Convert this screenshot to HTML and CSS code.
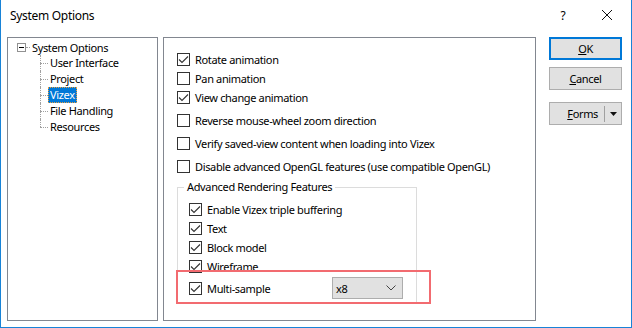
FILE: index.html
```html
<!DOCTYPE html>
<html lang="en">
<head>
  <meta charset="UTF-8">
  <title>System Options</title>
  <link rel="stylesheet" href="styles.css">
</head>
<body>

  <div class="window">
    <div class="titlebar">
      <span class="title">System Options</span>
      <span class="help">?</span>
      <span class="close">
        <svg width="12" height="12" viewBox="0 0 12 12"><path d="M1 1 L11 11 M11 1 L1 11" stroke="#111" stroke-width="1" fill="none"/></svg>
      </span>
    </div>

    <div class="content">
      <!-- tree of option pages -->
      <div class="tree">
        <div class="tree-root">
          <span class="expander"></span>
          <span class="stub"></span>
          <span>System Options</span>
        </div>
        <ul class="tree-children">
          <li><span class="branch"></span><span class="node">User Interface</span></li>
          <li><span class="branch"></span><span class="node">Project</span></li>
          <li><span class="branch"></span><span class="node selected">Vizex</span></li>
          <li><span class="branch"></span><span class="node">File Handling</span></li>
          <li><span class="branch"></span><span class="node">Resources</span></li>
        </ul>
      </div>

      <!-- Vizex page -->
      <div class="page">
        <div class="options">
          <label class="opt"><span class="box checked"></span>Rotate animation</label>
          <label class="opt"><span class="box"></span>Pan animation</label>
          <label class="opt"><span class="box checked"></span>View change animation</label>
          <label class="opt spaced"><span class="box"></span>Reverse mouse-wheel zoom direction</label>
          <label class="opt spaced"><span class="box"></span>Verify saved-view content when loading into Vizex</label>
          <label class="opt spaced"><span class="box"></span>Disable advanced OpenGL features (use compatible OpenGL)</label>
        </div>

        <fieldset class="group">
          <legend>Advanced Rendering Features</legend>
          <label class="opt"><span class="box checked"></span>Enable Vizex triple buffering</label>
          <label class="opt"><span class="box checked"></span>Text</label>
          <label class="opt"><span class="box checked"></span>Block model</label>
          <label class="opt"><span class="box checked"></span>Wireframe</label>
          <div class="opt multi">
            <label class="opt-label"><span class="box checked"></span>Multi-sample</label>
            <div class="combo">
              <span>x8</span>
              <svg width="10" height="6" viewBox="0 0 10 6"><path d="M0.5 0.5 L5 5 L9.5 0.5" stroke="#444" stroke-width="1" fill="none"/></svg>
            </div>
          </div>
        </fieldset>

        <div class="highlight"></div>
      </div>

      <!-- dialog buttons -->
      <div class="buttons">
        <button class="btn default"><u>O</u>K</button>
        <button class="btn"><u>C</u>ancel</button>
        <button class="btn split">
          <span class="split-text"><u>F</u>orms</span>
          <span class="split-arrow">
            <svg width="7" height="4" viewBox="0 0 7 4"><path d="M0 0 H7 L3.5 4 Z" fill="#111"/></svg>
          </span>
        </button>
      </div>
    </div>
  </div>

</body>
</html>
```

FILE: styles.css
```css
body {
  margin: 0;
  padding: 0;
  background-color: #ffffff;
  font-family: "Noto Sans", "Open Sans", sans-serif;
  font-size: 11px;
  letter-spacing: -0.35px;
  color: #000;
}

.window {
  box-sizing: border-box;
  width: 632px;
  height: 328px;
  border: 1px solid #1883d7;
  border-top: none;
  background-color: #fff;
  display: flex;
  flex-direction: column;
}

/* Title bar */
.titlebar {
  height: 30px;
  display: flex;
  align-items: center;
  flex-shrink: 0;
}

.title {
  font-size: 12px;
  letter-spacing: -0.3px;
  margin-left: 9px;
  flex: 1;
}

.help {
  font-size: 12px;
  width: 12px;
  text-align: center;
  margin-right: 32px;
}

.close {
  display: flex;
  margin-right: 18px;
}

/* Main area */
.content {
  display: flex;
  padding: 7px 0 0 6px;
  gap: 5px;
}

.tree {
  box-sizing: border-box;
  width: 151px;
  height: 284px;
  border: 1px solid #828790;
  padding: 1px 0 0 9px;
}

.tree-root {
  display: flex;
  align-items: center;
  height: 16px;
}

.expander {
  box-sizing: border-box;
  width: 9px;
  height: 9px;
  border: 1px solid #919191;
  position: relative;
  background: #fff;
}

.expander::after {
  content: "";
  position: absolute;
  left: 1px;
  top: 3px;
  width: 5px;
  height: 1px;
  background: #000;
}

.stub {
  width: 4px;
  border-top: 1px dotted #a0a0a0;
  margin: 0 2px 0 0;
}

.tree-children {
  list-style: none;
  margin: 0 0 0 23px;
  padding: 0;
}

.tree-children li {
  position: relative;
  display: flex;
  align-items: center;
  height: 16px;
}

.tree-children li::before {
  content: "";
  position: absolute;
  left: 0;
  top: 0;
  height: 16px;
  border-left: 1px dotted #a0a0a0;
}

.tree-children li:last-child::before {
  height: 8px;
}

.branch {
  width: 8px;
  border-top: 1px dotted #a0a0a0;
}

.node {
  padding: 0 1px;
  line-height: 14px;
  border: 1px solid transparent;
}

.node.selected {
  background-color: #0078d7;
  color: #fff;
  border: 1px dotted #e8a040;
}

/* Page */
.page {
  box-sizing: border-box;
  width: 373px;
  height: 284px;
  border: 1px solid #828790;
  position: relative;
  padding: 12px 0 0 13px;
}

.options {
  display: flex;
  flex-direction: column;
  gap: 1px;
}

.opt {
  display: flex;
  align-items: center;
  height: 18px;
  white-space: nowrap;
}

.opt.spaced {
  margin-top: 4px;
}

.box {
  box-sizing: border-box;
  width: 13px;
  height: 13px;
  border: 1px solid #333;
  background: #fff;
  margin-right: 5px;
  flex-shrink: 0;
}

.box.checked {
  background: #fff url("data:image/svg+xml;utf8,<svg xmlns='http://www.w3.org/2000/svg' width='11' height='11'><path d='M1 5.5 L4 8.5 L10 2.5' stroke='%23333' stroke-width='1.1' fill='none'/></svg>") no-repeat center;
}

.group {
  box-sizing: border-box;
  width: 240px;
  height: 124px;
  margin: 5px 0 0 0;
  padding: 6px 0 0 11px;
  border: 1px solid #dcdcdc;
  display: flex;
  flex-direction: column;
  gap: 1px;
}

.group legend {
  padding: 0 3px;
  margin-left: -5px;
  line-height: 14px;
}

.multi {
  height: 22px;
  margin-top: 1px;
}

.opt-label {
  display: flex;
  align-items: center;
  width: 143px;
}

.combo {
  box-sizing: border-box;
  width: 71px;
  height: 22px;
  border: 1px solid #adadad;
  background-color: #e1e1e1;
  display: flex;
  align-items: center;
  justify-content: space-between;
  padding: 0 6px 0 3px;
}

.highlight {
  position: absolute;
  left: 12px;
  top: 232px;
  width: 255px;
  height: 34px;
  box-sizing: border-box;
  border: 2px solid #f26b70;
}

/* Buttons */
.buttons {
  display: flex;
  flex-direction: column;
  margin-left: 8px;
  width: 73px;
}

.btn {
  box-sizing: border-box;
  width: 73px;
  height: 23px;
  background-color: #e1e1e1;
  border: 1px solid #adadad;
  font-family: inherit;
  font-size: 11px;
  letter-spacing: -0.35px;
  color: #000;
  padding: 0;
  margin-bottom: 7px;
}

.btn.default {
  border: 2px solid #0078d7;
}

.btn.split {
  margin-top: 5px;
  display: flex;
  align-items: center;
}

.split-text {
  flex: 1;
  text-align: right;
  padding-right: 6px;
}

.split-arrow {
  width: 16px;
  height: 16px;
  border-left: 1px solid #a0a0a0;
  display: flex;
  align-items: center;
  justify-content: center;
}
```
